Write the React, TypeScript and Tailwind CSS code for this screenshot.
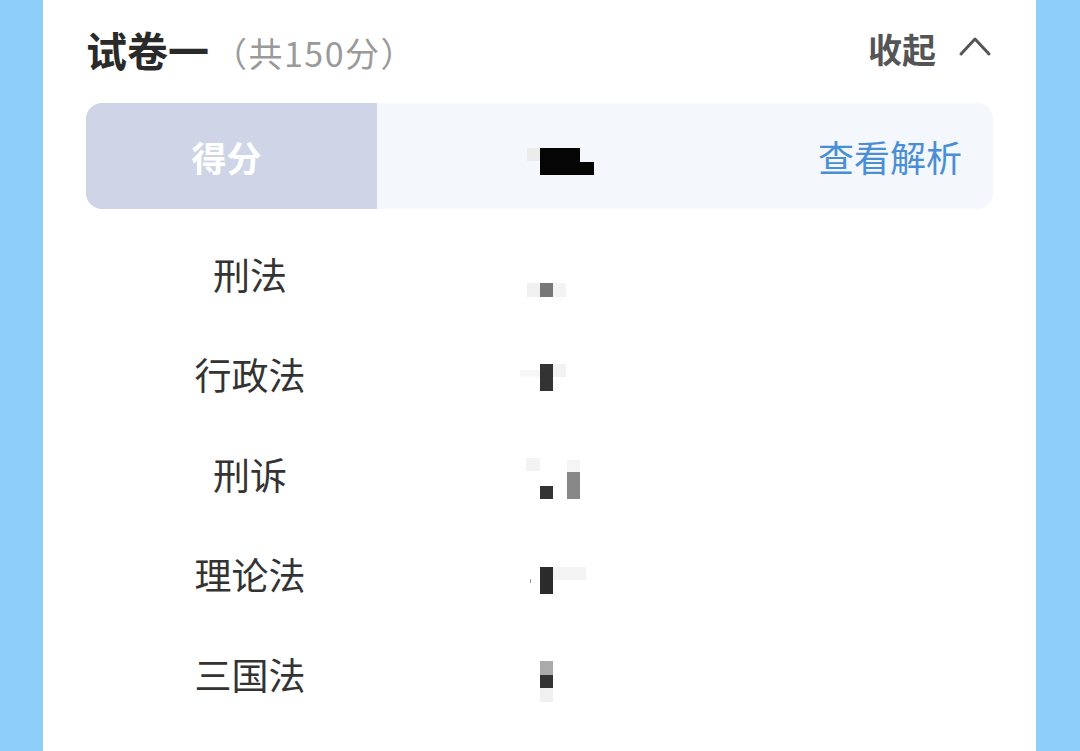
import React from "react";

const font = { fontFamily: '"Noto Sans CJK SC", "Noto Sans", sans-serif' };

type R = { x: number; y: number; w: number; h: number; c: string };

const rows: { label: string; rects: R[] }[] = [
  {
    label: "刑法",
    rects: [
      { x: 7, y: 59, w: 13, h: 14, c: "#f0f0f0" },
      { x: 20, y: 59, w: 13, h: 14, c: "#777777" },
      { x: 33, y: 59, w: 13, h: 14, c: "#f3f3f3" },
    ],
  },
  {
    label: "行政法",
    rects: [
      { x: 0, y: 46, w: 20, h: 7, c: "#f7f7f7" },
      { x: 20, y: 40, w: 13, h: 27, c: "#333333" },
      { x: 33, y: 40, w: 13, h: 13, c: "#f2f2f2" },
    ],
  },
  {
    label: "刑诉",
    rects: [
      { x: 6, y: 34, w: 14, h: 13, c: "#f3f3f3" },
      { x: 20, y: 62, w: 13, h: 13, c: "#333333" },
      { x: 47, y: 36, w: 13, h: 12, c: "#f5f5f5" },
      { x: 47, y: 48, w: 13, h: 27, c: "#888888" },
    ],
  },
  {
    label: "理论法",
    rects: [
      { x: 10, y: 55, w: 1, h: 4, c: "#999999" },
      { x: 20, y: 43, w: 13, h: 27, c: "#2b2b2b" },
      { x: 33, y: 43, w: 33, h: 13, c: "#f4f4f4" },
    ],
  },
  {
    label: "三国法",
    rects: [
      { x: 20, y: 37, w: 13, h: 14, c: "#aaaaaa" },
      { x: 20, y: 51, w: 13, h: 13, c: "#333333" },
      { x: 20, y: 64, w: 13, h: 14, c: "#f0f0f0" },
    ],
  },
];

function Mosaic({ rects, h }: { rects: R[]; h: number }) {
  return (
    <svg width="80" height={h} viewBox={`0 0 80 ${h}`} className="block shrink-0">
      {rects.map((r, i) => (
        <rect key={i} x={r.x} y={r.y} width={r.w} height={r.h} fill={r.c} />
      ))}
    </svg>
  );
}

export default function App() {
  return (
    <div className="w-[1080px] h-[751px] overflow-hidden bg-[#8ecff9] flex" style={font}>
      <div className="ml-[43px] w-[993px] h-full bg-white pt-[8px] px-[43px]">
        {/* header */}
        <div className="h-[82px] flex items-center justify-between">
          <div className="flex items-baseline">
            <span className="text-[41px] font-bold text-[#2a2a2a] leading-none">试卷一</span>
            <span className="ml-[4px] text-[34px] tracking-[1.5px] text-[#9a9a9a] leading-none">（共150分）</span>
          </div>
          <div className="flex items-center mr-[1px]">
            <span className="text-[34px] font-semibold text-[#555555] leading-none">收起</span>
            <svg width="34" height="24" viewBox="0 0 34 24" className="ml-[22px] mb-[6px]">
              <polyline points="3,20 17,5 31,20" fill="none" stroke="#555555" strokeWidth="3" strokeLinecap="round" strokeLinejoin="round" />
            </svg>
          </div>
        </div>
        {/* score bar */}
        <div className="mt-[13px] h-[106px] flex rounded-[16px] overflow-hidden">
          <div className="w-[291px] bg-[#cfd5e7] flex items-center justify-center">
            <span className="mr-[10px] text-[35px] font-bold text-white leading-none">得分</span>
          </div>
          <div className="flex-1 bg-[#f4f7fc] flex items-center">
            <div className="ml-[143px]">
              <svg width="80" height="106" viewBox="0 0 80 106" className="block">
                <rect x="7" y="45" width="13" height="13" fill="#ececec" />
                <rect x="20" y="45" width="40" height="27" fill="#050505" />
                <rect x="60" y="59" width="14" height="13" fill="#050505" />
              </svg>
            </div>
            <span className="ml-auto mr-[31px] text-[36px] text-[#4a8fd6] leading-none">查看解析</span>
          </div>
        </div>
        {/* rows */}
        <div className="mt-[15px] flex flex-col">
          {rows.map((r) => (
            <div key={r.label} className="h-[100px] flex items-center">
              <div className="w-[328px] text-center text-[37px] text-[#333333] leading-none">{r.label}</div>
              <div className="ml-[106px]">
                <Mosaic rects={r.rects} h={100} />
              </div>
            </div>
          ))}
        </div>
      </div>
    </div>
  );
}
